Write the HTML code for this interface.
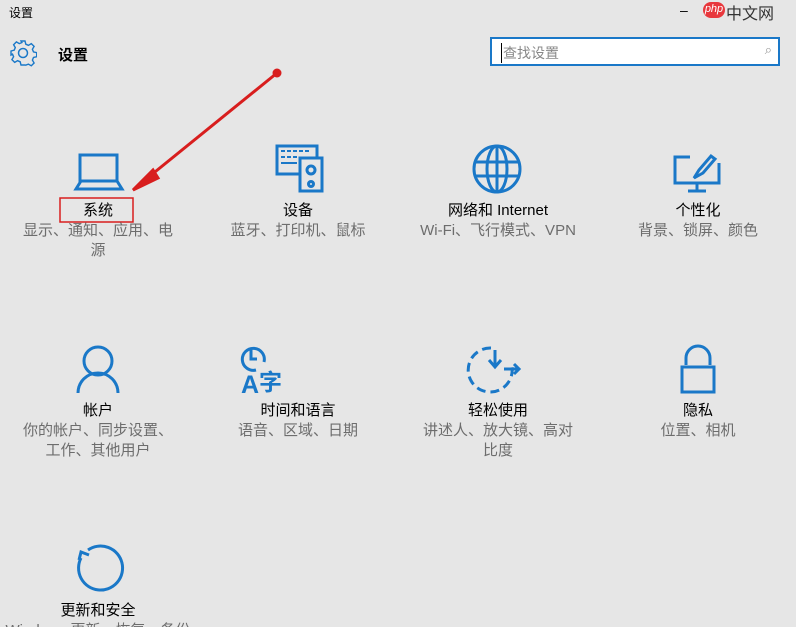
<!DOCTYPE html><html><head><meta charset="utf-8"><style>
html,body{margin:0;width:796px;height:627px;overflow:hidden}
body{background:#e6e6e6;font-family:"Liberation Sans","Noto Sans CJK SC",sans-serif;position:relative;color:#000}
.a{position:absolute}
.t{position:absolute;width:190px;text-align:center;font-size:15px;line-height:20px}
.s{color:#6d6d6d}
</style></head><body>
<div class="a" style="left:9px;top:4px;font-size:12px">设置</div>
<div class="a" style="left:680px;top:2px;font-size:14px">–</div>
<div class="a" style="left:703px;top:2px;width:22px;height:16px;border-radius:8px;background:#e8383d;color:#fff;font-size:11px;font-style:italic;text-align:center;line-height:15px">php</div>
<div class="a" style="left:726px;top:0px;font-size:16px;color:#333">中文网</div>
<svg class="a" style="left:9px;top:39px" width="28" height="28" viewBox="0 0 28 28"><circle cx="14" cy="14" r="4.5" fill="none" stroke="#1a78c8" stroke-width="1.5"/><path d="M12 2h4l.8 3.2 2.6 1.1 2.9-1.7 2.8 2.8-1.7 2.9 1.1 2.6 3.2.8v4l-3.2.8-1.1 2.6 1.7 2.9-2.8 2.8-2.9-1.7-2.6 1.1L16 26h-4l-.8-3.2-2.6-1.1-2.9 1.7-2.8-2.8 1.7-2.9-1.1-2.6L2 16v-4l3.2-.8 1.1-2.6-1.7-2.9 2.8-2.8 2.9 1.7 2.6-1.1z" fill="none" stroke="#1a78c8" stroke-width="1.4"/></svg>
<div class="a" style="left:58px;top:44px;font-size:15px;font-weight:bold">设置</div>
<div class="a" style="left:490px;top:37px;width:290px;height:29px;border:2px solid #1a78c8;background:#fff;box-sizing:border-box"><span style="position:absolute;left:9px;top:4px;font-size:14px;color:#888;border-left:1px solid #000;padding-left:1px">查找设置</span><span style="position:absolute;right:6px;top:3px;color:#999;font-size:13px">⌕</span></div>

<svg class="a" style="left:0;top:0" width="796" height="627">
<g fill="none" stroke="#1a78c8" stroke-width="3">
<rect x="80" y="155" width="37" height="26"/><path d="M76 189h46l-5-8H81z"/>
<rect x="277" y="146" width="40" height="28"/>
<rect x="300" y="158" width="22" height="33" fill="#e6e6e6"/><circle cx="311" cy="170" r="4"/><circle cx="311" cy="184" r="2.5"/>
<circle cx="497" cy="169" r="23"/><ellipse cx="497" cy="169" rx="10" ry="23"/><path d="M474 162h46M474 176h46M497 146v46"/>
<path d="M690 157h-15v26h44v-20M697 183v7M688 191h18"/><path d="M694 178l5-8 12-14 4 3-12 14z"/>
<circle cx="98" cy="361" r="14"/><path d="M78 393a20 20 0 0 1 40 0"/>
<path d="M256 370a11 11 0 1 1 8-8"/><path d="M251 350v9h6"/>
<path d="M491 348a22 22 0 1 0 21 19" stroke-dasharray="9 5"/><path d="M495 350v16M489 360l6 7 6-7M504 369h15M514 364l5 5-5 5"/>
<path d="M686 365v-7a12 12 0 0 1 24 0v7"/><rect x="682" y="367" width="32" height="25"/>
<path d="M88 550a22 22 0 1 1-7 8"/><path d="M79 560l2-8 8 3"/>
</g>
<g fill="#1a78c8"><rect x="281" y="150" width="4" height="2"/><rect x="287" y="150" width="4" height="2"/><rect x="293" y="150" width="4" height="2"/><rect x="299" y="150" width="4" height="2"/><rect x="305" y="150" width="4" height="2"/><rect x="281" y="156" width="4" height="2"/><rect x="287" y="156" width="4" height="2"/><rect x="293" y="156" width="4" height="2"/><rect x="281" y="162" width="16" height="2"/></g>
<text x="241" y="393" font-size="25" font-weight="bold" fill="#1a78c8" font-family="Liberation Sans,sans-serif">A</text>
<text x="259" y="390" font-size="23" font-weight="bold" fill="#1a78c8" font-family="Noto Sans CJK SC,sans-serif">字</text>
<g stroke="#d81e1e" stroke-width="3" fill="#d81e1e"><line x1="277" y1="73" x2="145" y2="180"/><path d="M133 190l20-20 5 8z"/><circle cx="277" cy="73" r="3"/></g>
<rect x="60" y="198" width="73" height="24" fill="none" stroke="#d81e1e" stroke-width="1.5"/>
</svg>

<div class="t" style="left:3px;top:201px">系统<br><span class="s">显示、通知、应用、电<br>源</span></div>
<div class="t" style="left:203px;top:201px">设备<br><span class="s">蓝牙、打印机、鼠标</span></div>
<div class="t" style="left:403px;top:201px">网络和 Internet<br><span class="s">Wi-Fi、飞行模式、VPN</span></div>
<div class="t" style="left:603px;top:201px">个性化<br><span class="s">背景、锁屏、颜色</span></div>
<div class="t" style="left:3px;top:401px">帐户<br><span class="s">你的帐户、同步设置、<br>工作、其他用户</span></div>
<div class="t" style="left:203px;top:401px">时间和语言<br><span class="s">语音、区域、日期</span></div>
<div class="t" style="left:403px;top:401px">轻松使用<br><span class="s">讲述人、放大镜、高对<br>比度</span></div>
<div class="t" style="left:603px;top:401px">隐私<br><span class="s">位置、相机</span></div>
<div class="t" style="left:3px;top:601px">更新和安全<br><span class="s">Windows 更新、恢复、备份</span></div>
</body></html>
